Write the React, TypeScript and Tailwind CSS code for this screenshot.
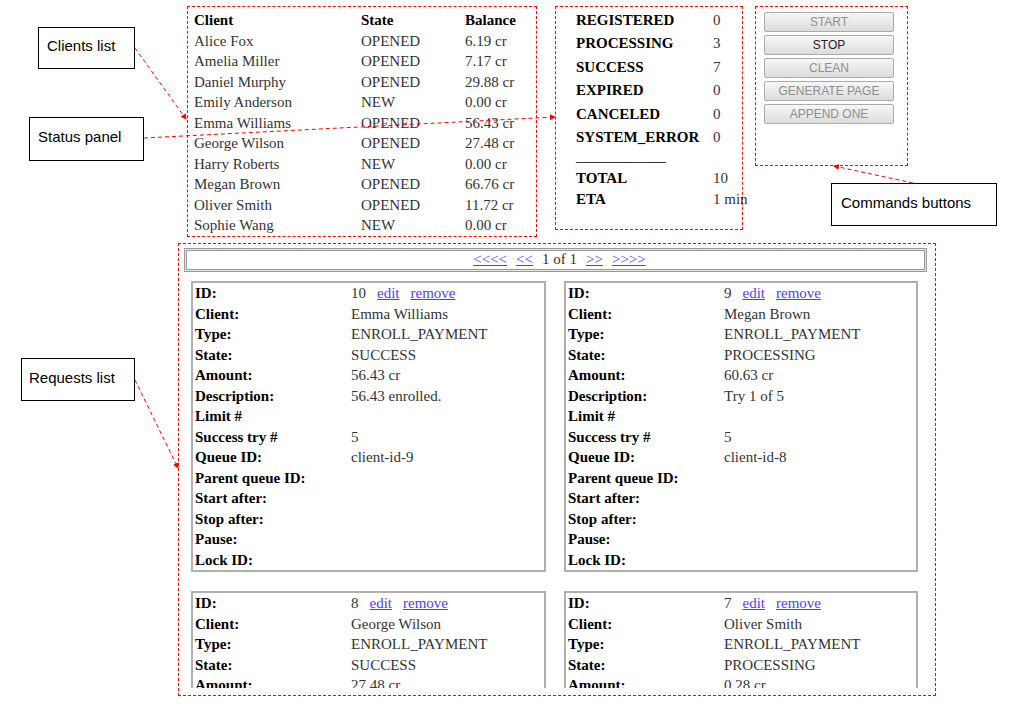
import React from 'react';

const clients = [
  ['Alice Fox', 'OPENED', '6.19 cr'],
  ['Amelia Miller', 'OPENED', '7.17 cr'],
  ['Daniel Murphy', 'OPENED', '29.88 cr'],
  ['Emily Anderson', 'NEW', '0.00 cr'],
  ['Emma Williams', 'OPENED', '56.43 cr'],
  ['George Wilson', 'OPENED', '27.48 cr'],
  ['Harry Roberts', 'NEW', '0.00 cr'],
  ['Megan Brown', 'OPENED', '66.76 cr'],
  ['Oliver Smith', 'OPENED', '11.72 cr'],
  ['Sophie Wang', 'NEW', '0.00 cr'],
];

const stats = [
  ['REGISTERED', '0'],
  ['PROCESSING', '3'],
  ['SUCCESS', '7'],
  ['EXPIRED', '0'],
  ['CANCELED', '0'],
  ['SYSTEM_ERROR', '0'],
];

type Req = {
  id: number;
  client: string;
  state: string;
  amount: string;
  description: string;
  queue: string;
};

const requests: Req[] = [
  { id: 10, client: 'Emma Williams', state: 'SUCCESS', amount: '56.43 cr', description: '56.43 enrolled.', queue: 'client-id-9' },
  { id: 9, client: 'Megan Brown', state: 'PROCESSING', amount: '60.63 cr', description: 'Try 1 of 5', queue: 'client-id-8' },
  { id: 8, client: 'George Wilson', state: 'SUCCESS', amount: '27.48 cr', description: '27.48 enrolled.', queue: 'client-id-6' },
  { id: 7, client: 'Oliver Smith', state: 'PROCESSING', amount: '0.28 cr', description: 'Try 1 of 5', queue: 'client-id-5' },
];

const buttons = [
  { label: 'START', enabled: false },
  { label: 'STOP', enabled: true },
  { label: 'CLEAN', enabled: false },
  { label: 'GENERATE PAGE', enabled: false },
  { label: 'APPEND ONE', enabled: false },
];

const Link: React.FC<{ children: React.ReactNode }> = ({ children }) => (
  <a href="#" className="text-[#4f3ff0] underline">
    {children}
  </a>
);

const RequestCard: React.FC<{ r: Req }> = ({ r }) => {
  const rows: [string, React.ReactNode][] = [
    [
      'ID:',
      <span className="flex gap-[11px]">
        <span>{r.id}</span>
        <Link>edit</Link>
        <Link>remove</Link>
      </span>,
    ],
    ['Client:', r.client],
    ['Type:', 'ENROLL_PAYMENT'],
    ['State:', r.state],
    ['Amount:', r.amount],
    ['Description:', r.description],
    ['Limit #', ''],
    ['Success try #', '5'],
    ['Queue ID:', r.queue],
    ['Parent queue ID:', ''],
    ['Start after:', ''],
    ['Stop after:', ''],
    ['Pause:', ''],
    ['Lock ID:', ''],
  ];
  return (
    <div className="border-2 border-[#b0b0b0] px-[2px]">
      {rows.map(([label, value], i) => (
        <div key={i} className="grid grid-cols-[156px_1fr] h-[20.5px] leading-[20.5px]">
          <span className="font-bold text-black whitespace-nowrap">{label}</span>
          <span className="text-[#333] whitespace-nowrap">{value}</span>
        </div>
      ))}
    </div>
  );
};

const Callout: React.FC<{ className: string; children: React.ReactNode }> = ({ className, children }) => (
  <div
    className={`absolute flex items-center border border-black bg-white pb-[3px] font-['Liberation_Sans',Arial,sans-serif] text-[15px] text-black ${className}`}
  >
    {children}
  </div>
);

const App: React.FC = () => {
  return (
    <div className="relative w-[1012px] h-[711px] overflow-hidden bg-white font-['Liberation_Serif','Times_New_Roman',serif] text-[15px]">
      <div className="flex flex-col pt-[6px]">
        <div className="flex items-start pl-[187px]">
          {/* Clients list */}
          <div className="w-[350px] h-[231px] border border-dashed border-[#f00] pl-[6px] pt-[3px]">
            <div className="grid grid-cols-[167px_104px_1fr] h-[20.5px] leading-[20.5px] font-bold text-black">
              <span>Client</span>
              <span>State</span>
              <span>Balance</span>
            </div>
            {clients.map(([name, state, balance]) => (
              <div key={name} className="grid grid-cols-[167px_104px_1fr] h-[20.5px] leading-[20.5px] text-[#333]">
                <span>{name}</span>
                <span>{state}</span>
                <span>{balance}</span>
              </div>
            ))}
          </div>

          {/* Status panel */}
          <div className="ml-[18px] w-[188px] h-[224px] border border-dashed border-[#f00] pl-[20px] pt-[2px]">
            {stats.map(([label, value]) => (
              <div key={label} className="grid grid-cols-[137px_1fr] h-[23.4px] leading-[23.4px]">
                <span className="font-bold text-black">{label}</span>
                <span className="text-[#333]">{value}</span>
              </div>
            ))}
            <div className="h-[12px] leading-[14px] mb-[7px] text-black">____________</div>
            <div className="grid grid-cols-[137px_1fr] h-[21px] leading-[21px]">
              <span className="font-bold text-black">TOTAL</span>
              <span className="text-[#333]">10</span>
            </div>
            <div className="grid grid-cols-[137px_1fr] h-[21px] leading-[21px]">
              <span className="font-bold text-black">ETA</span>
              <span className="text-[#333] whitespace-nowrap">1 min</span>
            </div>
          </div>

          {/* Commands */}
          <div className="ml-[12px] w-[153px] h-[160px] border border-dashed border-[#f00] pl-[8px] pt-[5px] flex flex-col gap-[3px]">
            {buttons.map((b) => (
              <button
                key={b.label}
                className={`w-[130px] h-[20px] rounded-[2px] border border-[#ababab] bg-gradient-to-b from-[#f7f7f7] to-[#dcdcdc] font-['Liberation_Sans',Arial,sans-serif] text-[12px] leading-[18px] ${
                  b.enabled ? 'text-[#222]' : 'text-[#8e8e8e]'
                }`}
              >
                {b.label}
              </button>
            ))}
          </div>
        </div>

        {/* Requests list */}
        <div className="ml-[178px] mt-[6px] w-[758px] h-[453px] border border-dashed border-[#f00] pl-[5px] pr-[8px] pt-[4px] pb-[6px] flex flex-col">
          <div className="h-[24px] border border-[#999] bg-[#e4e4e4] p-[1px]">
            <div className="h-full border border-[#999] bg-white flex items-center justify-center gap-[9px] pl-[8px] pb-[1px] leading-none">
              <Link>&lt;&lt;&lt;&lt;</Link>
              <Link>&lt;&lt;</Link>
              <span className="text-[#333]">1 of 1</span>
              <Link>&gt;&gt;</Link>
              <Link>&gt;&gt;&gt;&gt;</Link>
            </div>
          </div>
          <div className="mt-[9px] h-[407px] overflow-hidden pl-[7px]">
            <div className="grid grid-cols-[355px_354px] gap-x-[18px] gap-y-[19px]">
              {requests.map((r) => (
                <RequestCard key={r.id} r={r} />
              ))}
            </div>
          </div>
        </div>
      </div>

      {/* Annotations */}
      <Callout className="left-[38px] top-[27px] w-[97px] h-[42px] pl-[8px]">Clients list</Callout>
      <Callout className="left-[29px] top-[117px] w-[115px] h-[44px] pl-[8px]">Status panel</Callout>
      <Callout className="left-[21px] top-[358px] w-[114px] h-[43px] pl-[7px]">Requests list</Callout>
      <Callout className="left-[831px] top-[183px] w-[166px] h-[43px] pl-[9px]">Commands buttons</Callout>

      <svg className="absolute inset-0 pointer-events-none" width="1012" height="711">
        <defs>
          <marker id="head" markerWidth="6" markerHeight="6" refX="5" refY="3" orient="auto" markerUnits="userSpaceOnUse">
            <path d="M0,0 L6,3 L0,6 z" fill="#f00" />
          </marker>
        </defs>
        <g stroke="#f00" strokeWidth="1" strokeDasharray="4 3" fill="none">
          <line x1="135" y1="48" x2="186" y2="119" markerEnd="url(#head)" />
          <line x1="144" y1="138" x2="555" y2="117" markerEnd="url(#head)" />
          <line x1="135" y1="380" x2="178" y2="468" markerEnd="url(#head)" />
          <line x1="913" y1="183" x2="834" y2="166" markerEnd="url(#head)" />
        </g>
      </svg>
    </div>
  );
};

export default App;
